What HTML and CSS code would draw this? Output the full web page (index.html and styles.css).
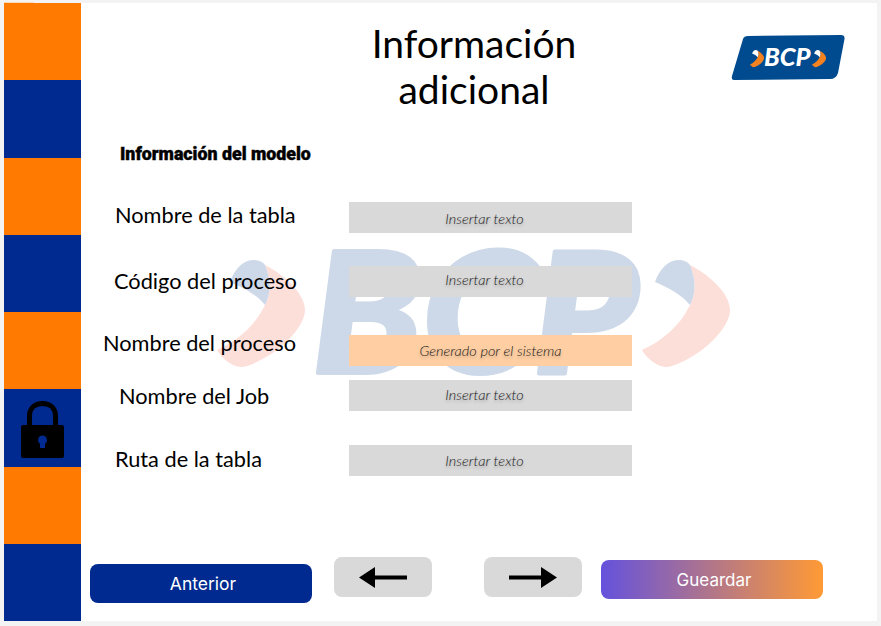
FILE: index.html
```html
<!DOCTYPE html>
<html lang="en">
<head>
  <meta charset="UTF-8">
  <title>Información adicional</title>
  <link rel="stylesheet" href="styles.css">
</head>
<body>
  <div class="frame">
    <div class="sidebar">
      <div class="seg orange"></div>
      <div class="seg blue"></div>
      <div class="seg orange"></div>
      <div class="seg blue"></div>
      <div class="seg orange"></div>
      <div class="seg blue">
        <svg class="lock" width="43" height="57" viewBox="0 0 43 57">
          <path d="M8.500 26V15C8.500 7 14 2.500 21.500 2.500S34.500 7 34.500 15V26" fill="none" stroke="#000" stroke-width="5"/>
          <path d="M2 24H41Q43 24 43 26V55Q43 57 41 57H2Q0 57 0 55V26Q0 24 2 24ZM21.500 34.500A4.500 4.500 0 0 0 19 42.700V47H24V42.700A4.500 4.500 0 0 0 21.500 34.500Z" fill="#000" fill-rule="evenodd"/>
        </svg>
      </div>
      <div class="seg orange"></div>
      <div class="seg blue"></div>
    </div>

    <div class="content">
      <svg class="watermark" width="530" height="220" viewBox="0 -50 530 220">
        <g id="chevron">
          <path d="M48 21C68 31 88 50 88 66C88 84 60 112 30 122C18 126 6 116 0 106C20 97 38 82 48 61C55 48 53 33 48 21Z" fill="#fddfda"/>
          <path d="M13 38C17 26 26 16 36 16C42 16 46 18 48 21C53 33 55 48 48 61C40 51 27 44 13 38Z" fill="#cdd9e9"/>
        </g>
        <text class="wm-text" x="95" y="129" textLength="326" lengthAdjust="spacingAndGlyphs">BCP</text>
        <use href="#chevron" x="425"/>
      </svg>

      <div class="header">
        <h1 class="title">Información adicional</h1>
        <svg class="logo" width="114" height="45" viewBox="0 0 114 45">
          <path d="M12 4Q13 1 17 1L110 0Q114 0 113.500 4L107 38Q105 44 99 44L3 45Q0 45 1 41Z" fill="#004b8f"/>
          <g transform="translate(19 12.500) scale(0.16)">
            <path d="M48 21C68 31 88 50 88 66C88 84 60 112 30 122C18 126 6 116 0 106C20 97 38 82 48 61C55 48 53 33 48 21Z" fill="#f58220"/>
            <path d="M13 38C17 26 26 16 36 16C42 16 46 18 48 21C53 33 55 48 48 61C40 51 27 44 13 38Z" fill="#fff"/>
          </g>
          <g transform="translate(81 12.500) scale(0.16)">
            <path d="M48 21C68 31 88 50 88 66C88 84 60 112 30 122C18 126 6 116 0 106C20 97 38 82 48 61C55 48 53 33 48 21Z" fill="#f58220"/>
            <path d="M13 38C17 26 26 16 36 16C42 16 46 18 48 21C53 33 55 48 48 61C40 51 27 44 13 38Z" fill="#fff"/>
          </g>
          <text class="logo-text" x="33" y="31">BCP</text>
        </svg>
      </div>

      <h2 class="subtitle">Información del modelo</h2>

      <div class="form">
        <div class="row row-tabla">
          <label class="field-label">Nombre de la tabla</label>
          <div class="field">Insertar texto</div>
        </div>
        <div class="row row-codigo">
          <label class="field-label">Código del proceso</label>
          <div class="field">Insertar texto</div>
        </div>
        <div class="row row-proceso">
          <label class="field-label">Nombre del proceso</label>
          <div class="field generated">Generado por el sistema</div>
        </div>
        <div class="row row-job">
          <label class="field-label">Nombre del Job</label>
          <div class="field">Insertar texto</div>
        </div>
        <div class="row row-ruta">
          <label class="field-label">Ruta de la tabla</label>
          <div class="field">Insertar texto</div>
        </div>
      </div>

      <div class="footer">
        <button class="btn btn-prev">Anterior</button>
        <button class="btn btn-arrow btn-back">
          <svg width="48" height="21" viewBox="0 0 48 21"><path d="M0 10.500L16 0V8.500H48V12.500H16V21Z" fill="#000"/></svg>
        </button>
        <button class="btn btn-arrow btn-forward">
          <svg width="48" height="21" viewBox="0 0 48 21"><path d="M48 10.500L32 0V8.500H0V12.500H32V21Z" fill="#000"/></svg>
        </button>
        <button class="btn btn-save">Gueardar</button>
      </div>
    </div>
  </div>
</body>
</html>
```

FILE: styles.css
```css
html, body {
  margin: 0;
  height: 100%;
}
body {
  background: #f3f3f3;
  font-family: Lato, sans-serif;
  overflow: hidden;
}
.frame {
  display: flex;
  height: 618px;
  margin: 3px 4px 0;
  background: #fff;
}
.sidebar {
  position: relative;
  width: 77px;
  display: flex;
  flex-direction: column;
}
.sidebar::before {
  content: "";
  position: absolute;
  left: 0;
  top: -1px;
  width: 30px;
  height: 1px;
  background: #fbd9b8;
}
.seg {
  flex: 1;
  display: flex;
  align-items: center;
  justify-content: center;
}
.orange {
  background: #ff7a00;
}
.blue {
  background: #002a8f;
}
.lock {
  margin-top: 4px;
}
.content {
  flex: 1;
  position: relative;
  display: flex;
  flex-direction: column;
}
.watermark {
  position: absolute;
  left: 136px;
  top: 191px;
}
.wm-text {
  font-family: Lato, sans-serif;
  font-weight: 900;
  font-style: italic;
  font-size: 168px;
  fill: #cdd9e9;
  stroke: #cdd9e9;
  stroke-width: 4px;
  stroke-linejoin: round;
}
.header {
  height: 111px;
  display: flex;
  justify-content: space-between;
  align-items: flex-start;
  position: relative;
}
.title {
  width: 260px;
  margin: 17px 0 0 263px;
  font-weight: 400;
  font-size: 39px;
  line-height: 46px;
  text-align: center;
  color: #000;
}
.logo {
  margin: 32px 32px 0 0;
}
.logo-text {
  font-family: Lato, sans-serif;
  font-weight: 900;
  font-style: italic;
  font-size: 25.500px;
  fill: #fff;
}
.subtitle {
  position: relative;
  margin: 28px 0 0 39px;
  font-family: Roboto, sans-serif;
  font-weight: 900;
  font-size: 17.800px;
  line-height: 24px;
  color: #000;
  -webkit-text-stroke: 0.4px #000;
}
.form {
  position: relative;
  display: flex;
  flex-direction: column;
  margin-top: 36px;
}
.row {
  display: flex;
  align-items: center;
  height: 31px;
}
.row-codigo {
  margin-top: 33px;
}
.row-proceso {
  margin-top: 38px;
}
.row-job {
  margin-top: 14px;
}
.row-ruta {
  margin-top: 34px;
}
.field-label {
  width: 268px;
  box-sizing: border-box;
  font-size: 21.750px;
  line-height: 28px;
  color: #000;
  white-space: nowrap;
}
.row-tabla .field-label {
  padding-left: 34px;
  margin-bottom: 5px;
}
.row-codigo .field-label {
  padding-left: 33px;
  margin-bottom: 1px;
}
.row-proceso .field-label {
  padding-left: 22px;
  margin-bottom: 16px;
}
.row-job .field-label {
  padding-left: 38px;
}
.row-ruta .field-label {
  padding-left: 34px;
  margin-bottom: 3px;
}
.field {
  width: 283px;
  height: 31px;
  padding-right: 12px;
  box-sizing: border-box;
  background: #d9d9d9;
  font-style: italic;
  font-weight: 300;
  font-size: 14.500px;
  line-height: 33px;
  text-align: center;
  color: #1a1a1a;
  text-shadow: 0 2px 3px rgba(0, 0, 0, 0.25);
}
.row-codigo .field {
  line-height: 28px;
}
.row-job .field {
  line-height: 29px;
}
.row-ruta .field {
  line-height: 32px;
}
.generated {
  padding-right: 0;
  background: #ffcfa3;
  line-height: 32px;
}
.footer {
  position: relative;
  display: flex;
  align-items: flex-start;
  margin-top: auto;
  padding: 0 0 18px 9px;
}
.btn {
  border: none;
  padding: 0;
  display: flex;
  align-items: center;
  justify-content: center;
  font-family: Inter, sans-serif;
  font-weight: 400;
  color: #fff;
  border-radius: 8px;
}
.btn-prev {
  width: 222px;
  height: 39px;
  margin-top: 7px;
  padding-left: 4px;
  font-size: 17.500px;
  background: #002a8f;
}
.btn-arrow {
  width: 98px;
  height: 40px;
  background: #d9d9d9;
}
.btn-back {
  margin-left: 22px;
}
.btn-forward {
  margin-left: 52px;
}
.btn-save {
  width: 222px;
  height: 39px;
  margin: 3px 0 0 19px;
  padding-left: 4px;
  font-size: 17px;
  background: linear-gradient(90deg, #6552dd, #ff9a35);
}
```
